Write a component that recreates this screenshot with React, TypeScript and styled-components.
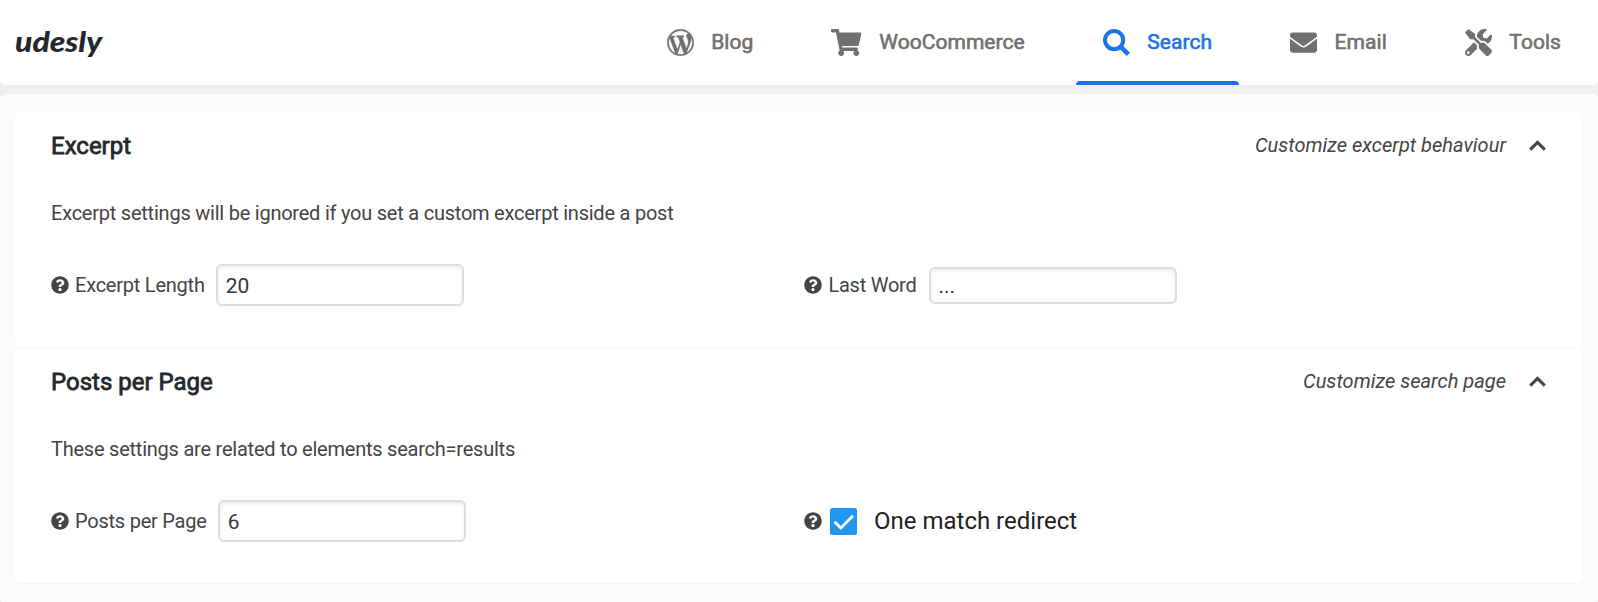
import React from "react";
import styled, { createGlobalStyle } from "styled-components";
import {
  FaShoppingCart,
  FaEnvelope,
  FaTools,
  FaQuestionCircle,
} from "react-icons/fa";

const GlobalStyle = createGlobalStyle`
  * { box-sizing: border-box; }
  body {
    margin: 0;
    background: #efefef;
    font-family: Roboto, "Liberation Sans", sans-serif;
    color: #444;
  }
`;

const Page = styled.div`
  display: flex;
  flex-direction: column;
  gap: 9px;
  height: 602px;
  overflow: hidden;
`;

const Header = styled.header`
  display: flex;
  justify-content: space-between;
  height: 85px;
  padding: 0 10px 0 15px;
  background: #fff;
  border-radius: 0 0 5px 5px;
`;

const Logo = styled.svg`
  width: 100px;
  height: 85px;
  fill: #23282d;
`;

const Tabs = styled.nav`
  display: flex;
  gap: 24px;
`;

const Tab = styled.a<{ $active?: boolean; $iconWidth?: number }>`
  position: relative;
  display: flex;
  align-items: center;
  gap: 17.5px;
  height: 85px;
  padding: 0 27px 1px;
  font-size: 21px;
  letter-spacing: 0.05px;
  color: ${(p) => (p.$active ? "#1a73e8" : "#707070")};
  -webkit-text-stroke: 0.6px currentColor;

  &::after {
    content: "";
    display: ${(p) => (p.$active ? "block" : "none")};
    position: absolute;
    inset: auto 0 0;
    height: 4px;
    background: #1a73e8;
    border-radius: 4px 4px 0 0;
  }

  svg {
    flex: none;
    width: ${(p) => p.$iconWidth ?? 27}px;
    height: 27px;
  }
`;

const Main = styled.main`
  flex: 1;
  padding: 18px 16px 19px 15px;
  background: #fafafa;
  border-radius: 5px;
`;

const Card = styled.section`
  height: 236px;
  padding: 0 36px;
  background: #fff;
  border-bottom: 1px solid #f7f7f7;
  border-radius: 5px;
`;

const CardHeader = styled.div`
  display: flex;
  align-items: center;
  justify-content: space-between;
  height: 67px;
`;

const Title = styled.h2`
  margin: 0;
  font-size: 24px;
  font-weight: 400;
  color: #23282d;
  -webkit-text-stroke: 0.8px currentColor;
`;

const Hint = styled.div`
  display: flex;
  align-items: center;
  gap: 23px;
  padding-bottom: 2px;
  font-size: 20px;
  font-style: italic;
  letter-spacing: 0.02px;
`;

const Chevron = styled.svg`
  width: 17px;
  height: 11px;
  margin-top: 1px;
  fill: none;
  stroke: #444;
  stroke-width: 3;
`;

const Description = styled.p`
  margin: 0;
  height: 67px;
  line-height: 68px;
  font-size: 20px;
  letter-spacing: -0.23px;
`;

const Fields = styled.div`
  display: grid;
  grid-template-columns: 753.4px 1fr;
  height: 77px;
`;

const Field = styled.label`
  display: flex;
  align-items: center;
  height: 77px;
  font-size: 20px;
  letter-spacing: -0.23px;
`;

const Help = styled(FaQuestionCircle)`
  width: 18px;
  height: 18px;
  margin-right: 6px;
`;

const Input = styled.input<{ $compact?: boolean }>`
  width: 248px;
  height: ${(p) => (p.$compact ? 37 : 42)}px;
  margin: ${(p) => (p.$compact ? "1px 0 0 12px" : "0 0 0 11px")};
  padding: ${(p) => (p.$compact ? 1 : 2)}px 8px 0;
  border: 2px solid #ddd;
  border-radius: 6px;
  box-shadow: inset 0 2px 4px rgba(0, 0, 0, 0.07);
  background: #fff;
  color: #32373c;
  font: 21px Roboto, sans-serif;
  outline: none;
`;

const Box = styled.svg`
  width: 27px;
  height: 27px;
  margin: 1px 17px 0 1.6px;
`;

const CheckText = styled.span`
  font-size: 24px;
  letter-spacing: 0;
  color: #212121;
`;

function WordpressIcon() {
  return (
    <svg
      viewBox="-0.15 -0.15 20.3 20.3"
      fill="currentColor"
      stroke="currentColor"
      strokeWidth="0.3"
    >
      <path d="M20 10c0-5.51-4.49-10-10-10C4.48 0 0 4.49 0 10c0 5.52 4.48 10 10 10 5.51 0 10-4.48 10-10zM7.78 15.37L4.37 6.22c.55-.02 1.17-.08 1.17-.08.5-.06.44-1.13-.06-1.11 0 0-1.45.11-2.37.11-.18 0-.37 0-.58-.01C4.12 2.69 6.87 1.11 10 1.11c2.33 0 4.45.87 6.05 2.34-.68-.11-1.65.39-1.65 1.58 0 .74.45 1.36.9 2.1.35.61.55 1.36.55 2.46 0 1.49-1.4 5-1.4 5l-3.03-8.37c.54-.02.82-.17.82-.17.5-.05.44-1.25-.06-1.22 0 0-1.44.12-2.38.12-.87 0-2.33-.12-2.33-.12-.5-.03-.56 1.2-.06 1.22l.92.08 1.26 3.41zM17.41 10c.24-.64.74-1.87.43-4.25.7 1.29 1.05 2.71 1.05 4.25 0 3.29-1.73 6.24-4.4 7.78.97-2.59 1.94-5.2 2.92-7.78zM6.1 18.09C3.12 16.65 1.11 13.53 1.11 10c0-1.3.23-2.48.72-3.59C3.25 10.3 4.67 14.2 6.1 18.09zm4.03-6.63l2.58 6.98c-.86.29-1.76.45-2.71.45-.79 0-1.57-.11-2.29-.33.81-2.38 1.62-4.74 2.42-7.1z" />
    </svg>
  );
}

function SearchIcon() {
  return (
    <svg viewBox="0 0 27 27" fill="none" stroke="currentColor">
      <circle cx="11.1" cy="11.1" r="9.1" strokeWidth="4" />
      <path d="M17.6 17.6 25.4 25.4" strokeWidth="4.6" />
    </svg>
  );
}

function Section({ title, hint, text, children }: {
  title: string;
  hint: string;
  text: string;
  children: React.ReactNode;
}) {
  return (
    <Card>
      <CardHeader>
        <Title>{title}</Title>
        <Hint>
          {hint}
          <Chevron viewBox="0 0 17 11">
            <path d="M1.2 9.6 8.5 2.4 15.8 9.6" />
          </Chevron>
        </Hint>
      </CardHeader>
      <Description>{text}</Description>
      <Fields>{children}</Fields>
    </Card>
  );
}

export default function App() {
  return (
    <>
      <GlobalStyle />
      <Page>
        <Header>
          <Logo viewBox="0 0 100 85">
            <text
              x="0"
              y="52"
              textLength="87"
              lengthAdjust="spacingAndGlyphs"
              fontFamily="Lato"
              fontWeight="900"
              fontStyle="italic"
              fontSize="29"
            >
              udesly
            </text>
          </Logo>
          <Tabs>
            <Tab><WordpressIcon />Blog</Tab>
            <Tab $iconWidth={30.4}><FaShoppingCart />WooCommerce</Tab>
            <Tab $active><SearchIcon />Search</Tab>
            <Tab><FaEnvelope />Email</Tab>
            <Tab><FaTools />Tools</Tab>
          </Tabs>
        </Header>
        <Main>
          <Section
            title="Excerpt"
            hint="Customize excerpt behaviour"
            text="Excerpt settings will be ignored if you set a custom excerpt inside a post"
          >
            <Field><Help />Excerpt Length<Input defaultValue="20" /></Field>
            <Field><Help />Last Word<Input $compact defaultValue="..." /></Field>
          </Section>
          <Section
            title="Posts per Page"
            hint="Customize search page"
            text="These settings are related to elements search=results"
          >
            <Field><Help />Posts per Page<Input defaultValue="6" /></Field>
            <Field>
              <Help />
              <Box viewBox="0 0 27 27">
                <rect width="27" height="27" rx="2.5" fill="#2196f3" />
                <path d="M4.5 13.8 10.8 20 23 7.8" fill="none" stroke="#fff" strokeWidth="2.8" />
              </Box>
              <CheckText>One match redirect</CheckText>
            </Field>
          </Section>
        </Main>
      </Page>
    </>
  );
}
